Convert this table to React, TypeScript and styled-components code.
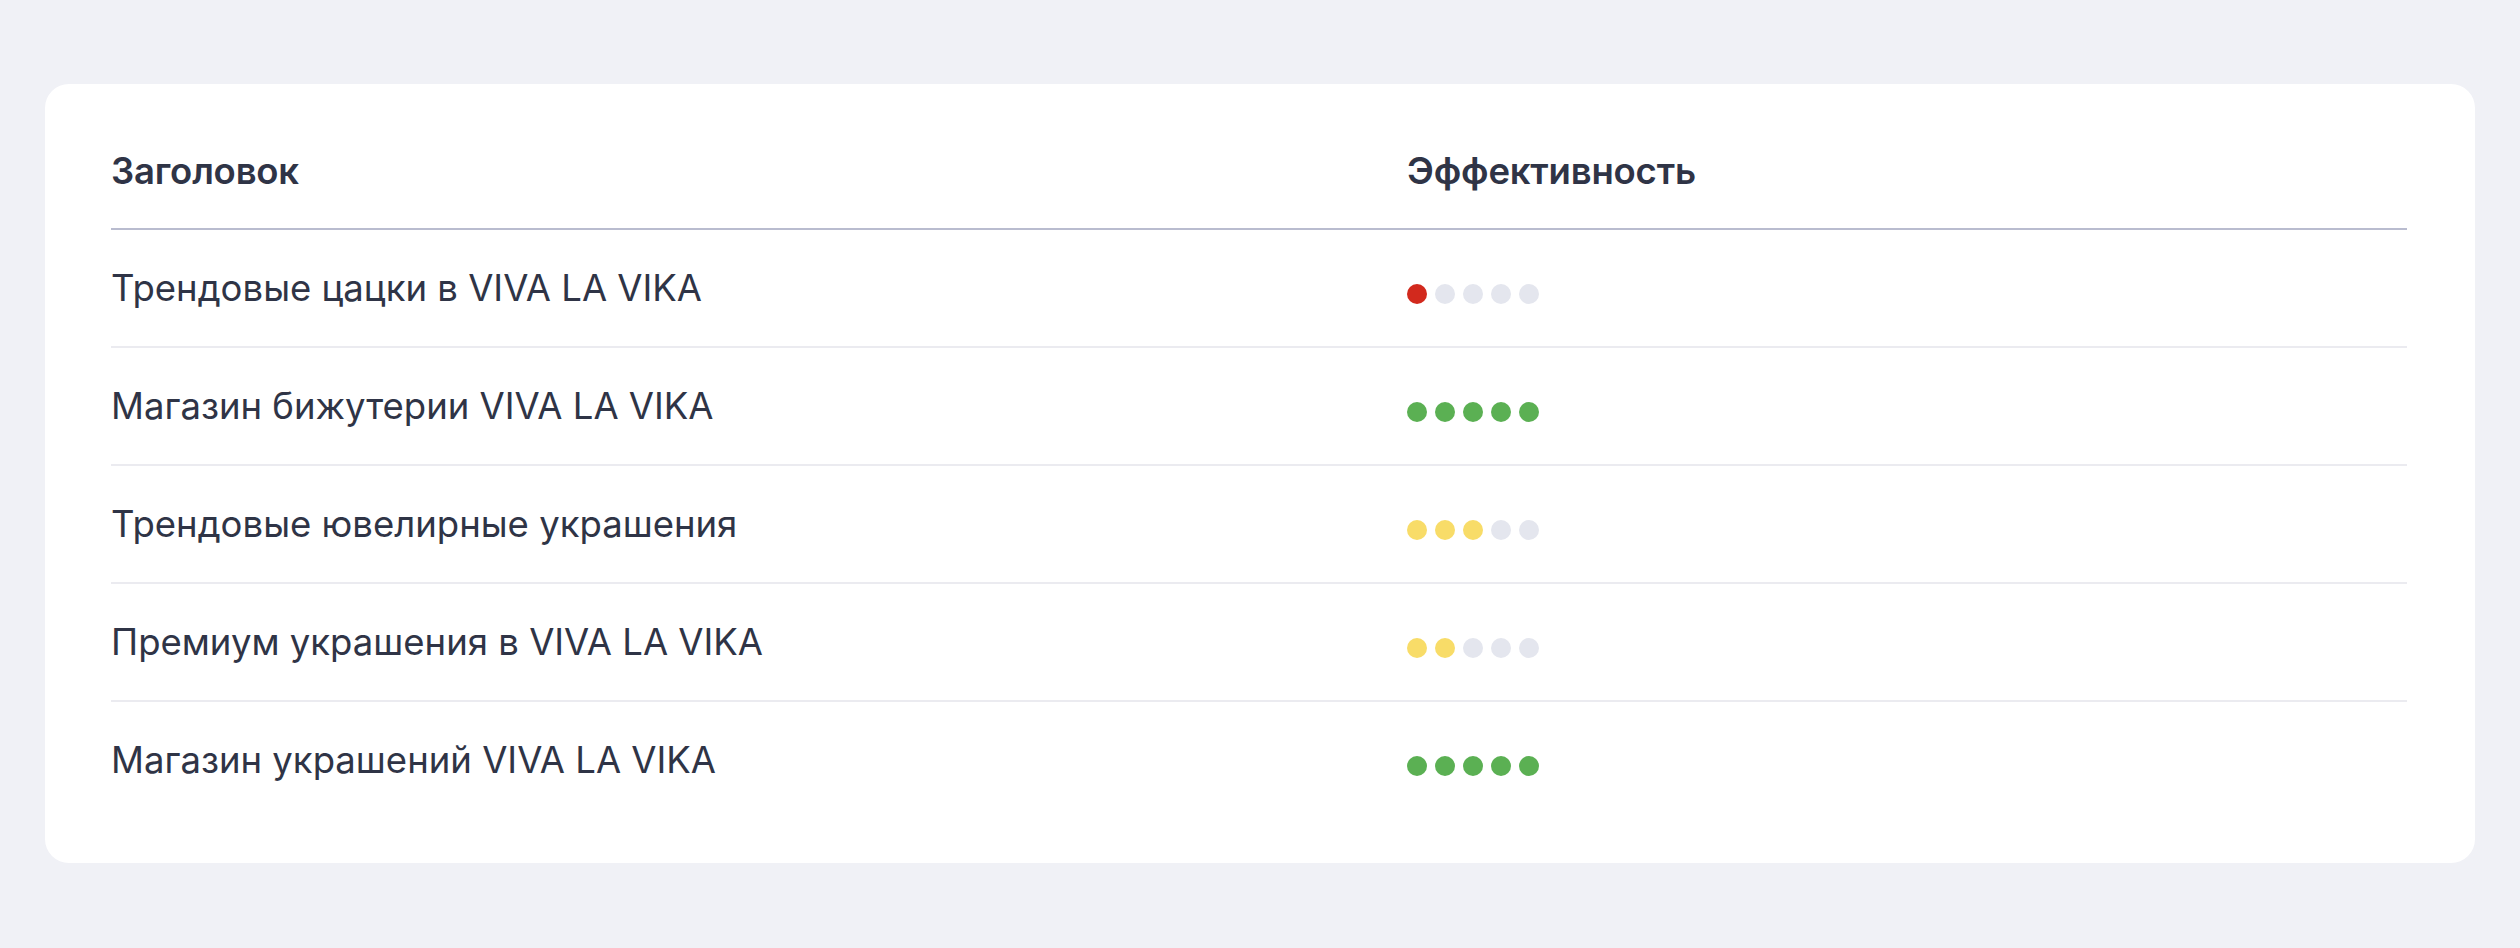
import React from 'react';
import styled, { createGlobalStyle } from 'styled-components';

const GlobalStyle = createGlobalStyle`
  html, body {
    margin: 0;
    padding: 0;
    background: #f0f1f6;
  }
  body {
    font-family: Inter, "Noto Sans", sans-serif;
    color: #2f3446;
  }
`;

const Page = styled.main`
  padding: 84px 45px 85px 45px;
`;

const Card = styled.section`
  background: #ffffff;
  border-radius: 24px;
  padding: 44px 68px 45px 66px;
`;

const Grid = styled.div`
  display: grid;
  grid-template-columns: 1296px 1fr;
`;

const HeadCell = styled.div`
  font-size: 36.5px;
  font-weight: 600;
  line-height: 48px;
  letter-spacing: -0.2px;
  padding: 19px 0 33px;
  border-bottom: 2px solid #b9bccf;
`;

const Cell = styled.div<{ $last?: boolean }>`
  height: 116px;
  display: flex;
  align-items: center;
  font-size: 36.5px;
  line-height: 44px;
  letter-spacing: 0;
  border-bottom: ${(p) => (p.$last ? 'none' : '2px solid #ebebf0')};
`;

const Dots = styled.div`
  display: flex;
  gap: 8px;
  margin-top: 12px;
`;

const Dot = styled.span<{ $color: string }>`
  width: 20px;
  height: 20px;
  border-radius: 50%;
  background: ${(p) => p.$color};
`;

const palette: Record<string, string> = {
  red: '#d2291d',
  green: '#5bb053',
  yellow: '#f8dc68',
};

const rows = [
  { title: 'Трендовые цацки в VIVA LA VIKA', score: 1, tone: 'red' },
  { title: 'Магазин бижутерии VIVA LA VIKA', score: 5, tone: 'green' },
  { title: 'Трендовые ювелирные украшения', score: 3, tone: 'yellow' },
  { title: 'Премиум украшения в VIVA LA VIKA', score: 2, tone: 'yellow' },
  { title: 'Магазин украшений VIVA LA VIKA', score: 5, tone: 'green' },
];

const Rating = ({ score, tone }: { score: number; tone: string }) => (
  <Dots>
    {[0, 1, 2, 3, 4].map((i) => (
      <Dot key={i} $color={i < score ? palette[tone] : '#e4e6ee'} />
    ))}
  </Dots>
);

const App = () => (
  <Page>
    <GlobalStyle />
    <Card>
      <Grid>
        <HeadCell>Заголовок</HeadCell>
        <HeadCell>Эффективность</HeadCell>
        {rows.map((r, i) => {
          const last = i === rows.length - 1;
          return (
            <React.Fragment key={r.title}>
              <Cell $last={last}>{r.title}</Cell>
              <Cell $last={last}>
                <Rating score={r.score} tone={r.tone} />
              </Cell>
            </React.Fragment>
          );
        })}
      </Grid>
    </Card>
  </Page>
);

export default App;
